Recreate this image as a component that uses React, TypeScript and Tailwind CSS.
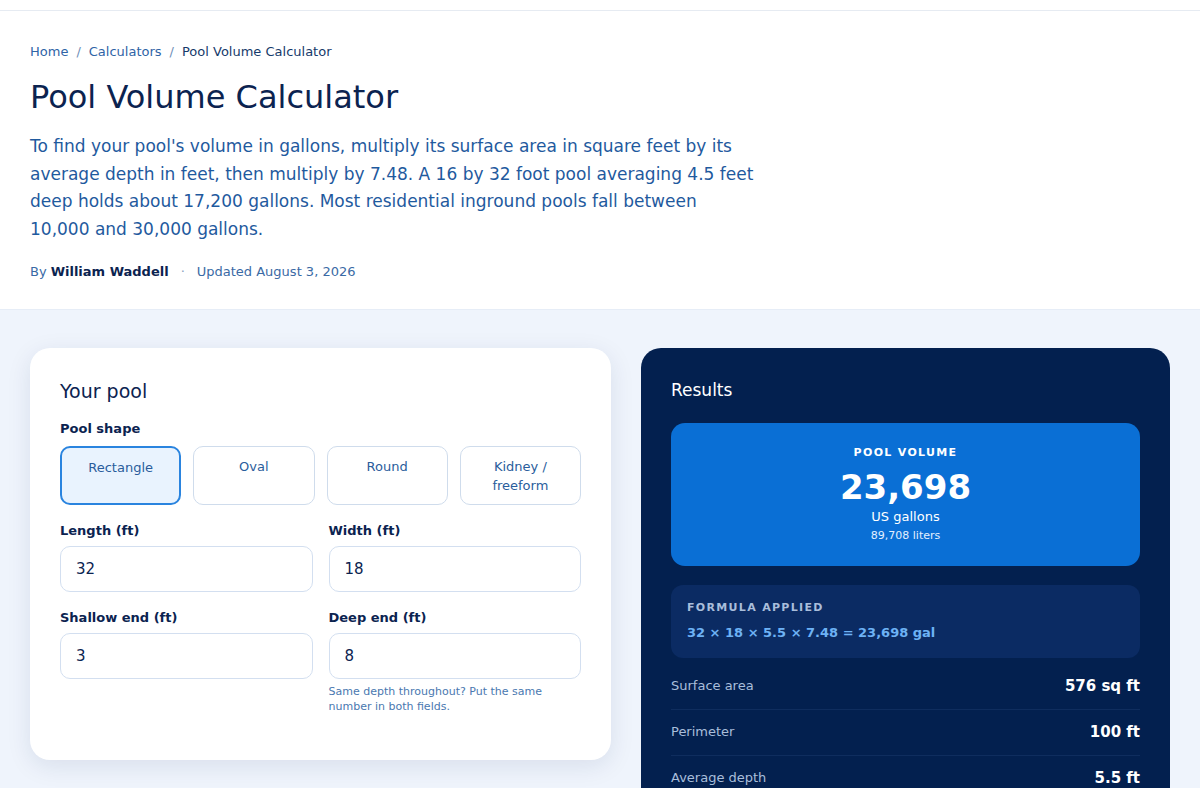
import { useState } from "react"

const shapes = ["Rectangle", "Oval", "Round", "Kidney / freeform"]

const stats = [
  { label: "Surface area", value: "576 sq ft" },
  { label: "Perimeter", value: "100 ft" },
  { label: "Average depth", value: "5.5 ft" },
  { label: "Water weight", value: "197,640 lb" },
]

function Field({ label, value, hint }: { label: string; value: string; hint?: string }) {
  return (
    <div className="flex flex-col">
      <label className="text-[13px] font-bold text-[#0b2350] leading-[18px] mb-[6px]">{label}</label>
      <input
        defaultValue={value}
        className="h-[46px] w-full rounded-[10px] border border-[#d3dff0] bg-white px-[15px] text-[15px] text-[#0b2350] outline-none"
      />
      {hint && <p className="mt-[5px] text-[11px] leading-[15px] text-[#4a78b0]">{hint}</p>}
    </div>
  )
}

export default function App() {
  const [shape, setShape] = useState("Rectangle")

  return (
    <div className="min-h-screen bg-[#eff4fc] font-['DejaVu_Sans',sans-serif]">
      {/* top bar */}
      <div className="h-[11px] border-b border-[#e6ebf2] bg-white" />

      {/* header */}
      <div className="border-b border-[#e6edf7] bg-white px-[30px] pt-[32px] pb-[28px]">
        <nav className="flex items-center gap-[8px] text-[13px] leading-[18px] text-[#2f64a6]">
          <span>Home</span>
          <span className="text-[#6f8fb8]">/</span>
          <span>Calculators</span>
          <span className="text-[#6f8fb8]">/</span>
          <span className="text-[#163a6b]">Pool Volume Calculator</span>
        </nav>
        <h1 className="mt-[17px] text-[32px] leading-[38px] font-normal text-[#0b2350]">Pool Volume Calculator</h1>
        <p className="mt-[17px] max-w-[730px] text-[17px] leading-[27.7px] text-[#1f5a9e]">
          To find your pool's volume in gallons, multiply its surface area in square feet by its average depth in feet, then multiply by 7.48. A 16 by 32 foot pool averaging 4.5 feet deep holds about 17,200 gallons. Most residential inground pools fall between 10,000 and 30,000 gallons.
        </p>
        <div className="mt-[19px] flex items-center text-[13px] leading-[18px] text-[#3a6aa5]">
          <span>By</span>
          <span className="ml-[4px] font-bold text-[#0b2350]">William Waddell</span>
          <span className="mx-[12px] text-[#8aa2c2]">·</span>
          <span>Updated August 3, 2026</span>
        </div>
      </div>

      {/* calculator */}
      <div className="flex items-start gap-[30px] px-[30px] pt-[38px]">
        <div className="w-[581px] rounded-[20px] bg-white px-[30px] pt-[30px] pb-[46px] shadow-[0_6px_24px_rgba(15,40,90,0.10)]">
          <h2 className="text-[19px] leading-[26px] text-[#0b2350]">Your pool</h2>
          <div className="mt-[16px] text-[13px] font-bold leading-[18px] text-[#0b2350]">Pool shape</div>
          <div className="mt-[8px] grid grid-cols-4 gap-[12px]">
            {shapes.map((s) => (
              <button
                key={s}
                onClick={() => setShape(s)}
                className={
                  "rounded-[10px] px-[10px] pt-[10px] pb-[10px] text-[13px] leading-[19px] text-[#2a5d9c] h-[59px] flex justify-center " +
                  (shape === s ? "border-2 border-[#2a84df] bg-[#e9f3fe]" : "border-[1.5px] border-[#cfdcec] bg-white")
                }
              >
                <span className="max-w-[80px]">{s}</span>
              </button>
            ))}
          </div>
          <div className="mt-[17px] grid grid-cols-2 gap-x-[16px] gap-y-[17px]">
            <Field label="Length (ft)" value="32" />
            <Field label="Width (ft)" value="18" />
            <Field label="Shallow end (ft)" value="3" />
            <Field label="Deep end (ft)" value="8" hint="Same depth throughout? Put the same number in both fields." />
          </div>
        </div>

        <div className="w-[529px] rounded-[20px] bg-[#03204f] px-[30px] pt-[30px] pb-[30px]">
          <h2 className="text-[17px] leading-[24px] text-white">Results</h2>
          <div className="mt-[21px] flex flex-col items-center rounded-[14px] bg-[#0a6fd5] pt-[22px] pb-[23px]">
            <div className="text-[11px] font-bold leading-[15px] tracking-[0.12em] text-white">POOL VOLUME</div>
            <div className="mt-[7px] text-[34px] font-bold leading-[40px] text-white">23,698</div>
            <div className="mt-[1px] text-[13px] leading-[18px] text-white">US gallons</div>
            <div className="mt-[2px] text-[11px] leading-[15px] text-[#e3efff]">89,708 liters</div>
          </div>
          <div className="mt-[19px] rounded-[12px] bg-[#0b2b63] px-[16px] pt-[15px] pb-[16px]">
            <div className="text-[11px] font-bold leading-[15px] tracking-[0.12em] text-[#a9bedb]">FORMULA APPLIED</div>
            <div className="mt-[9px] text-[13px] font-bold leading-[18px] text-[#6db2f5]">32 × 18 × 5.5 × 7.48 = 23,698 gal</div>
          </div>
          <div className="mt-[6px]">
            {stats.map((r, i) => (
              <div
                key={r.label}
                className={"flex items-center justify-between py-[12.5px] " + (i < stats.length - 1 ? "border-b border-[#0f2d5e]" : "")}
              >
                <span className="text-[13px] leading-[20px] text-[#a9bedb]">{r.label}</span>
                <span className="text-[15px] font-bold leading-[20px] text-white">{r.value}</span>
              </div>
            ))}
          </div>
        </div>
      </div>
    </div>
  )
}
